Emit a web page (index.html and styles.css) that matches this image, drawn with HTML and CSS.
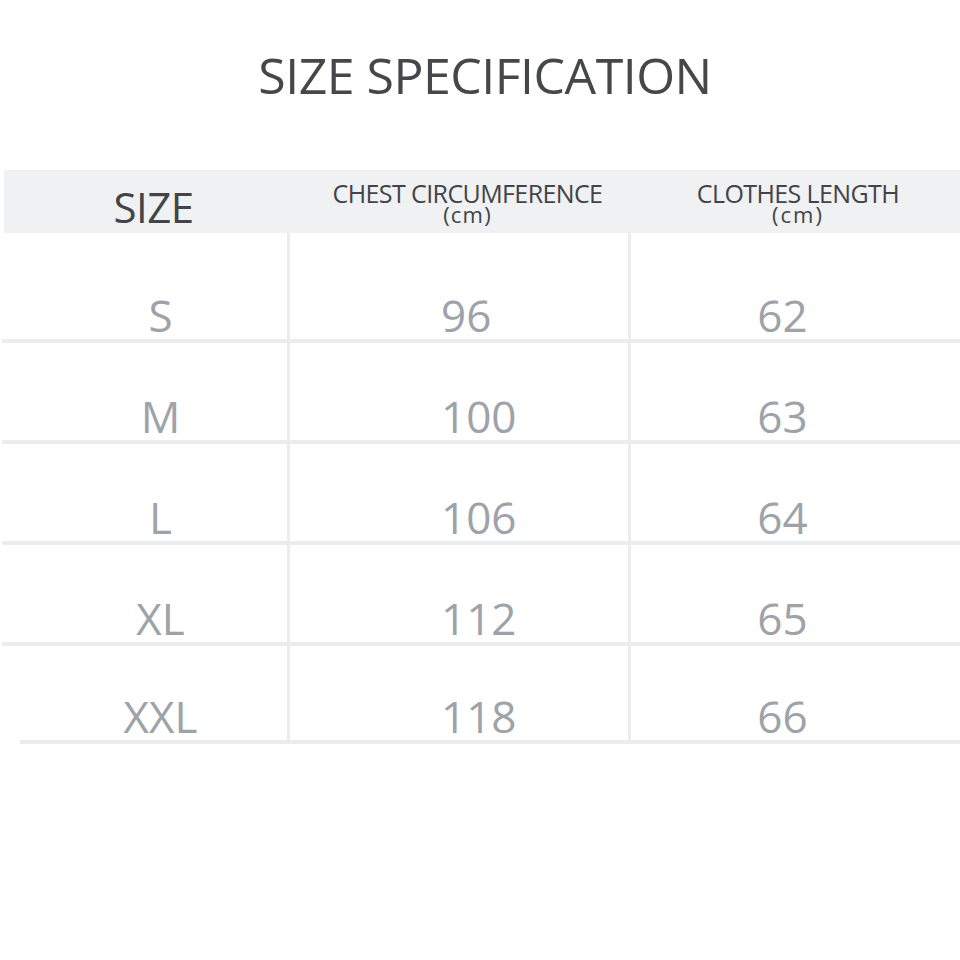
FILE: index.html
```html
<!DOCTYPE html>
<html>
<head>
<meta charset="utf-8">
<link rel="stylesheet" href="styles.css">
</head>
<body>
<h1 class="title">SIZE SPECIFICATION</h1>
<div class="table">
  <div class="head">
    <div class="hcell size-h">SIZE</div>
    <div class="hcell col2"><span class="lbl">CHEST CIRCUMFERENCE</span><span class="unit">(cm)</span></div>
    <div class="hcell col3"><span class="lbl">CLOTHES LENGTH</span><span class="unit wide">(cm)</span></div>
  </div>
  <div class="row first">
    <div class="cell c1">S</div><div class="cell c2">96</div><div class="cell c3">62</div>
  </div>
  <div class="row">
    <div class="cell c1">M</div><div class="cell c2">100</div><div class="cell c3">63</div>
  </div>
  <div class="row">
    <div class="cell c1">L</div><div class="cell c2">106</div><div class="cell c3">64</div>
  </div>
  <div class="row">
    <div class="cell c1">XL</div><div class="cell c2">112</div><div class="cell c3">65</div>
  </div>
  <div class="row last">
    <div class="cell c1">XXL</div><div class="cell c2">118</div><div class="cell c3">66</div>
  </div>
</div>
</body>
</html>
```
FILE: styles.css
```css
html, body {
  margin: 0;
  padding: 0;
  background: #ffffff;
  font-family: "Open Sans", "Noto Sans", sans-serif;
}
body {
  width: 960px;
  height: 960px;
}
.title {
  margin: 0;
  padding-top: 45px;
  padding-left: 10px;
  height: 170px;
  box-sizing: border-box;
  text-align: center;
  font-size: 50px;
  font-weight: 400;
  line-height: 60px;
  color: #46474b;
  letter-spacing: -0.5px;
}
.head {
  margin-left: 4px;
  height: 63px;
  background: #f0f1f3;
  display: grid;
  grid-template-columns: 283px 341px 1fr;
  color: #434448;
}
.hcell {
  display: flex;
  flex-direction: column;
  align-items: center;
  justify-content: flex-start;
}
.size-h {
  justify-content: center;
  font-size: 42px;
  line-height: 1;
  padding-top: 10px;
  padding-left: 16px;
  letter-spacing: -0.5px;
}
.col2, .col3 {
  padding-top: 13px;
}
.lbl {
  display: block;
  height: 21px;
  font-size: 25px;
  line-height: 20px;
  letter-spacing: -0.6px;
  white-space: nowrap;
}
.col2 { padding-left: 20px; }
.col3 { padding-left: 8px; }
.unit {
  display: block;
  height: 20px;
  font-size: 22px;
  line-height: 20px;
  letter-spacing: 1.2px;
}
.unit.wide {
  letter-spacing: 2px;
}
.row {
  display: grid;
  grid-template-columns: 285px 341px 1fr;
  height: 101px;
  border-bottom: 4px solid #ebecee;
  box-sizing: border-box;
  margin-left: 2px;
}
.row.first {
  height: 110px;
}
.row.last {
  margin-left: 20px;
  grid-template-columns: 267px 341px 1fr;
  height: 98px;
}
.cell {
  display: flex;
  align-items: flex-end;
  justify-content: center;
  font-size: 44px;
  line-height: 1;
  color: #9ea2a9;
  padding-bottom: 2px;
}
.c1 { padding-left: 32px; }
.last .c1 { padding-left: 14px; }
.c2, .c3 {
  border-left: 3px solid #ebecee;
}
.c2 {
  justify-content: flex-start;
  padding-left: 151px;
}
.c3 { padding-right: 26px; }
```
